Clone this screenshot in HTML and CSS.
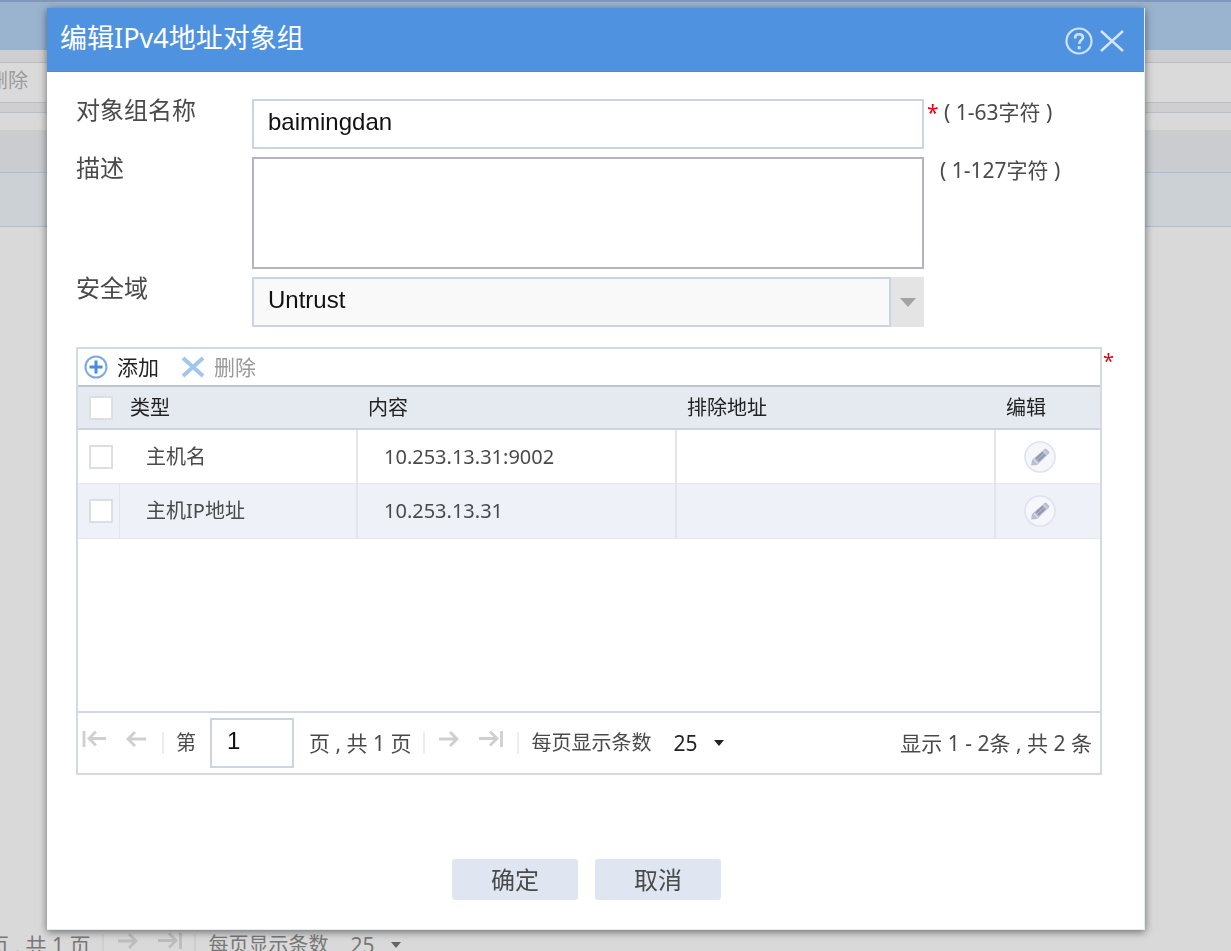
FILE: index.html
```html
<!DOCTYPE html>
<html lang="zh-CN">
<head>
<meta charset="utf-8">
<title>编辑IPv4地址对象组</title>
<link rel="stylesheet" href="styles.css">
</head>
<body>
<svg class="sprite" width="0" height="0" aria-hidden="true">
  <symbol id="i-first" viewBox="0 0 24 20"><path d="M2 2V18M24 9.500H7M14 2.500L7 9.500l7 7" fill="none" stroke="currentColor" stroke-width="2.800"/></symbol>
  <symbol id="i-prev" viewBox="0 0 24 20"><path d="M22 10H4M11 3L4 10l7 7" fill="none" stroke="currentColor" stroke-width="2.800"/></symbol>
  <symbol id="i-next" viewBox="0 0 24 20"><path d="M2 10h18M13 3l7 7-7 7" fill="none" stroke="currentColor" stroke-width="2.800"/></symbol>
  <symbol id="i-last" viewBox="0 0 24 20"><path d="M22.500 2V18M0 9.500h17M11 2.500l7 7-7 7" fill="none" stroke="currentColor" stroke-width="2.800"/></symbol>
  <symbol id="i-pencil" viewBox="0 0 32 32"><circle cx="16" cy="16" r="15" fill="#f6f7fb" stroke="#dfe2ee" stroke-width="1.500"/><path d="M7 24.500l1-5.500L20.500 8a1.500 1.500 0 0 1 2 0l2.500 2.500a1.500 1.500 0 0 1 0 2L13 24z" fill="#b9bdd0"/><path d="M12 18L19 11.500M14 20l7-6.500" stroke="#8f95b0" stroke-width="1.800"/><path d="M10 18.500l3.500 4" stroke="#dcdfea" stroke-width="1.200"/><path d="M19.500 9.500l3.500 4" stroke="#d0d3e0" stroke-width="1.200"/></symbol>
</svg>

<div class="page" aria-hidden="true">
  <div class="page-top"></div>
  <div class="page-gap"></div>
  <div class="page-tools">删除</div>
  <div class="page-gap short"></div>
  <div class="page-space"></div>
  <div class="page-head"></div>
  <div class="page-row"></div>
  <div class="page-body"></div>
  <div class="pager page-pager">
    <span class="pages">页 , 共 1 页</span>
    <span class="sep"></span>
    <svg class="arrow next"><use href="#i-next"/></svg>
    <svg class="arrow last"><use href="#i-last"/></svg>
    <span class="sep"></span>
    <span class="size-label">每页显示条数</span>
    <span class="size">25</span>
    <svg class="caret" viewBox="0 0 10 6"><path d="M0 0h10L5 6z" fill="currentColor"/></svg>
  </div>
</div>

<div class="overlay">
  <section class="dialog" role="dialog" aria-labelledby="dlg-title">
    <header class="dialog-head">
      <h1 id="dlg-title">编辑IPv4地址对象组</h1>
      <button class="head-btn" type="button" aria-label="帮助">
        <svg width="28" height="28" viewBox="0 0 28 28" fill="none" stroke="#cfe3fb"><circle cx="14" cy="14" r="12.500" stroke-width="2.200"/><path d="M10.200 11.500V10.200Q10.200 7.200 14 7.200T18 10.300Q18 12 16 13.400Q14.200 14.700 14.200 17" stroke-width="2.600"/><path d="M14.200 19.200v3" stroke-width="3"/></svg>
      </button>
      <button class="head-btn" type="button" aria-label="关闭">
        <svg width="24" height="24" viewBox="0 0 24 24" fill="none" stroke="#d5e6fb" stroke-width="2.400"><path d="M1 2l22 20M23 2L1 22"/></svg>
      </button>
    </header>
    <form class="dialog-body">
      <div class="fields">
        <label for="name">对象组名称</label>
        <input class="text" id="name" type="text" value="baimingdan">
        <span class="hint"><span class="req">*</span> ( 1-63字符 )</span>

        <label for="desc">描述</label>
        <textarea class="text area" id="desc"></textarea>
        <span class="hint indent">( 1-127字符 )</span>

        <label for="zone">安全域</label>
        <div class="combo">
          <select id="zone"><option>Untrust</option></select>
          <span class="combo-arrow"><svg width="16" height="9" viewBox="0 0 16 9"><path d="M0 0h16L8 9z" fill="#a3a3a3"/></svg></span>
        </div>
        <span></span>
      </div>

      <div class="grid-wrap">
        <div class="panel">
          <div class="tools">
            <button type="button" class="tool">
              <svg width="24" height="24" viewBox="0 0 24 24" fill="none"><circle cx="12" cy="12" r="10.500" stroke="#7ea9dc" stroke-width="2"/><path d="M12 5.500v13M5.500 12h13" stroke="#4a8bdc" stroke-width="3"/></svg>添加
            </button>
            <button type="button" class="tool off">
              <svg width="24" height="24" viewBox="0 0 24 24" fill="none" stroke="#a3c6ed" stroke-width="4"><path d="M2 3l20 18M22 3L2 21"/></svg>删除
            </button>
          </div>
          <table class="list">
            <colgroup><col class="c-check"><col class="c-type"><col><col><col class="c-edit"></colgroup>
            <thead>
              <tr><th><input type="checkbox" aria-label="全选"></th><th>类型</th><th>内容</th><th>排除地址</th><th>编辑</th></tr>
            </thead>
            <tbody>
              <tr><td><input type="checkbox" aria-label="选择主机名"></td><td>主机名</td><td>10.253.13.31:9002</td><td></td>
                <td><button type="button" class="edit" aria-label="编辑"><svg width="32" height="32"><use href="#i-pencil"/></svg></button></td></tr>
              <tr class="alt"><td><input type="checkbox" aria-label="选择主机IP地址"></td><td>主机IP地址</td><td>10.253.13.31</td><td></td>
                <td><button type="button" class="edit" aria-label="编辑"><svg width="32" height="32"><use href="#i-pencil"/></svg></button></td></tr>
            </tbody>
          </table>
          <div class="blank"></div>
          <div class="pager">
            <button type="button" class="nav" aria-label="首页"><svg class="arrow first"><use href="#i-first"/></svg></button>
            <button type="button" class="nav" aria-label="上一页"><svg class="arrow prev"><use href="#i-prev"/></svg></button>
            <span class="sep"></span>
            <label class="before" for="page">第</label>
            <input class="text page-no" id="page" type="text" value="1">
            <span class="pages">页 , 共 1 页</span>
            <span class="sep"></span>
            <button type="button" class="nav" aria-label="下一页"><svg class="arrow next"><use href="#i-next"/></svg></button>
            <button type="button" class="nav" aria-label="末页"><svg class="arrow last"><use href="#i-last"/></svg></button>
            <span class="sep"></span>
            <label class="size-label" for="size">每页显示条数</label>
            <select class="size" id="size"><option>25</option></select>
            <svg class="caret" viewBox="0 0 10 6"><path d="M0 0h10L5 6z" fill="currentColor"/></svg>
            <span class="status">显示 1 - 2条 , 共 2 条</span>
          </div>
        </div>
        <span class="req">*</span>
      </div>

      <div class="actions">
        <button type="submit">确定</button>
        <button type="button">取消</button>
      </div>
    </form>
  </section>
</div>
</body>
</html>
```
FILE: styles.css
```css
* { box-sizing: border-box; }

body {
  margin: 0;
  height: 100vh;
  overflow: hidden;
  background: #d9d9d9;
  color: #4a4a4a;
  font: 20px/28px "Noto Sans", "Noto Sans CJK SC", sans-serif;
}

button, select, input, textarea { font: inherit; color: inherit; border-radius: 0; }
button, select { appearance: none; border: 0; background: none; padding: 0; }
svg { display: block; flex: none; }
.sprite { position: absolute; }

/* page behind the dialog */
.page {
  display: flex;
  flex-direction: column;
  height: calc(100vh + 24px);
  margin-left: -12px;
}
.page > div { flex: none; }
.page-top { height: 50px; background: #9ab3cf; border-top: 2px solid #8197b9; }
.page-gap { height: 13px; background: #cfcfd0; border-bottom: 1px solid #b9bfc9; }
.page-gap.short { height: 10px; }
.page-tools { height: 40px; line-height: 36px; background: #dadada; border-bottom: 1px solid #b9bfc9; color: #9b9b9b; }
.page-space { height: 17px; }
.page-head { height: 43px; background: #cacccf; border-bottom: 1px solid #a9bfd0; }
.page-row { height: 54px; background: #cbd1d5; border-bottom: 1px solid #a9bfd0; }
.page .page-body { flex: 1; }
.page .page-pager { padding-left: 0; color: #787878; }
.page-pager .arrow { color: #bdbdbd; margin-bottom: 8px; }
.page-pager .sep { background: #cfcfcf; }

/* dialog */
.overlay {
  position: fixed;
  inset: 0;
  padding: 8px 86px 21px 47px;
}
.dialog {
  background: #fff;
  border-right: 1px solid #e3ecf3;
  border-bottom: 1px solid #e3ecf3;
  box-shadow: 0 2px 8px rgba(0, 0, 0, .5);
}
.dialog-head {
  display: flex;
  align-items: center;
  gap: 7px;
  height: 64px;
  padding: 2px 20px 0 13px;
  background: #4f92e0;
  border-bottom: 1px solid #5b87c0;
}
.dialog-head h1 {
  flex: 1;
  margin: 0;
  padding-bottom: 6px;
  color: #fff;
  font-size: 27px;
  font-weight: 400;
  line-height: 36px;
}
.dialog-body { padding: 27px 30px 29px 29px; }

.fields {
  display: grid;
  grid-template-columns: 176px 1fr 190px;
  row-gap: 8px;
}
.fields label { font-size: 24px; line-height: 22px; }
.text {
  display: block;
  width: 100%;
  min-width: 0;
  height: 50px;
  padding: 0 14px 4px;
  border: 2px solid #cbd5e2;
  background: #fff;
  color: #111;
  font-family: "Liberation Sans", Arial, sans-serif;
  font-size: 24px;
}
.area { height: 112px; border-color: #b3b3c3; resize: none; }
.hint { padding-left: 3px; font-size: 21px; line-height: 26px; }
.hint.indent { padding-left: 16px; }
.req { color: #e60012; }

.combo { display: flex; height: 50px; }
.combo select {
  flex: 1;
  padding: 0 14px 4px;
  border: 2px solid #cbd5e2;
  background: #f9f9f9;
  color: #111;
  font-family: "Liberation Sans", Arial, sans-serif;
  font-size: 24px;
}
.combo-arrow { display: flex; align-items: center; justify-content: center; width: 33px; background: #e4e4e4; }

/* address list */
.grid-wrap { display: flex; gap: 1px; margin-top: 20px; }
.panel { flex: 1; border: 2px solid #d3d9e5; }
.tools { display: flex; align-items: center; gap: 22px; height: 36px; padding-left: 6px; }
.tool { display: flex; align-items: center; gap: 9px; color: #222; font-size: 21px; }
.tool.off { color: #999; }

.list { width: 100%; border-collapse: separate; border-spacing: 0; table-layout: fixed; }
.c-check { width: 42px; }
.c-type { width: 238px; }
.c-edit { width: 104px; }
.list th {
  height: 45px;
  padding: 0 0 0 10px;
  border-top: 2px solid #bfc5cc;
  border-bottom: 2px solid #cbd3e3;
  background: #e4eaf0;
  color: #222;
  font-weight: 400;
  text-align: left;
}
.list td {
  height: 54px;
  padding: 0 0 0 26px;
  border-right: 2px solid #e2e5ea;
  border-bottom: 1px solid #e6e8ec;
}
.list td:last-child { border-right: 0; }
.list td:first-child { border-right: 0; }
.list .alt td { height: 55px; background: #eef1f7; }
.list .alt td:first-child { border-right: 1px solid #e2e5ea; }
.list th:first-child, .list td:first-child { padding: 0 0 0 11px; }
.list input {
  appearance: none;
  display: block;
  width: 24px;
  height: 24px;
  margin: 0;
  border: 2px solid #dcdfe2;
  background: #fff;
}
.edit { display: block; margin-left: 2px; }
.blank { height: 172px; }

/* pager */
.pager {
  display: flex;
  align-items: center;
  height: 62px;
  padding: 0 8px 0 4px;
  border-top: 2px solid #d0d7e3;
}
.pager > * { flex: none; }
.page .page-pager { border-top-color: #d9d9d9; }
.nav { margin-bottom: 8px; color: #cfcfcf; }
.arrow { width: 24px; height: 20px; }
.prev { margin-left: 18px; }
.last { margin-left: 18px; }
.sep { width: 2px; height: 22px; margin: 0 12px; background: #ececec; }
.nav + .sep { margin-left: 14px; }
.before { margin-right: 14px; }
.pages { font-size: 21px; }
.page-no { width: 84px; margin-right: 15px; padding-left: 15px; }
.size-label { margin-right: 22px; }
.size { color: #222; font-size: 21px; }
.page .size { color: #787878; }
.caret { width: 10px; height: 6px; margin-left: 16px; color: #222; }
.page .caret { color: #666; }
.status { margin-left: auto; font-size: 21px; }

.actions { display: flex; justify-content: center; gap: 17px; margin-top: 84px; padding-right: 17px; }
.actions button {
  min-width: 126px;
  height: 41px;
  border-radius: 3px;
  background: #dfe6f1;
  font-size: 24px;
  line-height: 36px;
}
```
